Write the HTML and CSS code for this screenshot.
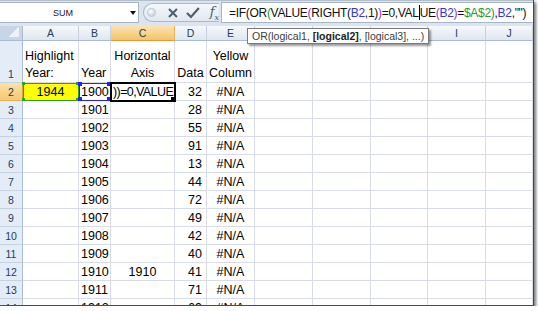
FILE: index.html
```html
<!DOCTYPE html>
<html lang="en">
<head>
    <meta charset="UTF-8">
    <meta name="viewport" content="width=device-width, initial-scale=1.0">
    <title>Highlight Year - Sheet1</title>
    <link rel="stylesheet" href="styles.css">
</head>
<body>
    <div class="window">
        <div class="formula-bar">
            <div class="name-box">
                <span class="name">SUM</span>
                <span class="drop"></span>
            </div>
            <div class="fx-buttons">
                <span class="dot"></span>
                <svg class="btn" width="12" height="12" viewBox="0 0 12 12">
                    <path d="M2 2 L10 10 M10 2 L2 10" stroke="#4f5c6c" stroke-width="2" fill="none"/>
                </svg>
                <svg class="btn" width="14" height="12" viewBox="0 0 14 12">
                    <path d="M1 6 L5 10 L13 1" stroke="#4f5c6c" stroke-width="2.2" fill="none"/>
                </svg>
                <span class="fx">f<sub>x</sub></span>
            </div>
            <div class="formula">=IF(OR<span class="p1">(</span>VALUE<span class="p2">(</span>RIGHT(<span class="r1">B2</span>,1)<span class="p2">)</span>=0,VAL<span class="caret"></span>UE<span class="p2">(</span><span class="r1">B2</span><span class="p2">)</span>=<span class="r2">$A$2</span><span class="p1">)</span>,<span class="r1">B2</span>,"")</div>
        </div>

        <div class="sheet" id="sheet"></div>

        <div class="tooltip">OR(logical1, <b>[logical2]</b>, [logical3], ...)</div>
    </div>

    <script>
        // Sheet data
        const cols = ['A', 'B', 'C', 'D', 'E', 'F', 'G', 'H', 'I', 'J'];
        const values = [32, 28, 55, 91, 13, 44, 72, 49, 42, 40, 41, 71, 69];

        const cells = {
            A1: { text: 'Highlight<br>Year:', cls: 'head left' },
            B1: { text: 'Year', cls: 'head left' },
            C1: { text: 'Horizontal<br>Axis', cls: 'head center' },
            D1: { text: 'Data', cls: 'head center' },
            E1: { text: 'Yellow<br>Column', cls: 'head center' },
            A2: { text: '1944<i class="h tl"></i><i class="h tr"></i><i class="h bl"></i><i class="h br"></i>', cls: 'center ref-green' },
            B2: { text: '1900<i class="h tl"></i><i class="h tr"></i><i class="h bl"></i><i class="h br"></i>', cls: 'left ref-blue' },
            C2: { text: '))=0,VALUE<i class="fill"></i>', cls: 'left active' },
            C12: { text: '1910', cls: 'center' }
        };

        values.forEach((v, i) => {
            const r = i + 2;
            cells['B' + r] = cells['B' + r] || { text: 1900 + i, cls: 'left' };
            cells['D' + r] = { text: v, cls: 'right' };
            cells['E' + r] = { text: '#N/A', cls: 'center' };
        });

        // Render grid
        function renderSheet() {
            let html = '<div class="corner"></div>';
            cols.forEach(c => {
                html += `<div class="col-head${c === 'C' ? ' sel' : ''}">${c}</div>`;
            });

            for (let r = 1; r <= 14; r++) {
                html += `<div class="row-head${r === 1 ? ' tall' : ''}${r === 2 ? ' sel' : ''}">${r}</div>`;
                cols.forEach(c => {
                    const cell = cells[c + r];
                    if (cell) {
                        html += `<div class="cell ${cell.cls}"><span class="txt">${cell.text}</span></div>`;
                    } else {
                        html += '<div class="cell"></div>';
                    }
                });
            }
            document.getElementById('sheet').innerHTML = html;
        }

        renderSheet();
    </script>
</body>
</html>
```

FILE: styles.css
```css
:root {
    --grid-line: #d8dce8;
    --head-line: #a9bcd3;
    --head-text: #233d5c;
    --sel-orange: #f5c96f;
}

* {
    margin: 0;
    padding: 0;
    box-sizing: border-box;
}

body {
    background-color: #ffffff;
    font-family: "Liberation Sans", Arial, sans-serif;
}

.window {
    position: relative;
    width: 534px;
    height: 306px;
    overflow: hidden;
    background-color: #ffffff;
    border-right: 1px solid #4a4a4a;
    border-bottom: 1px solid #4a4a4a;
    box-shadow: 2px 2px 3px rgba(0, 0, 0, 0.55);
}

/* Formula bar */
.formula-bar {
    height: 26px;
    display: flex;
    padding: 1px 0 3px;
    background-color: #dbe4ef;
    border-top: 1px solid #b3bfcd;
}

.name-box {
    width: 139px;
    flex-shrink: 0;
    display: flex;
    align-items: center;
    background-color: #ffffff;
    border: 1px solid #a8b5c6;
    border-left: none;
}

.name {
    flex: 1;
    text-align: center;
    font-size: 9px;
    color: #1a1a1a;
    padding-right: 4px;
}

.drop {
    width: 0;
    height: 0;
    margin-right: 2px;
    border-left: 3px solid transparent;
    border-right: 3px solid transparent;
    border-top: 4px solid #111;
}

.fx-buttons {
    width: 76px;
    flex-shrink: 0;
    margin: 1px 2px 1px 4px;
    display: flex;
    align-items: center;
    gap: 7px;
    padding-left: 3px;
    border: 1px solid #a9b8cb;
    border-right: none;
    border-radius: 10px 0 0 10px;
    background: linear-gradient(#f4f7fb, #e1e8f1);
}

.dot {
    width: 9px;
    height: 9px;
    border-radius: 50%;
    background: radial-gradient(circle at 40% 35%, #ffffff, #b9c1cb);
    border: 1px solid #c4ccd6;
    margin-right: 4px;
}

.fx {
    font-family: "DejaVu Serif", serif;
    font-style: italic;
    font-size: 13px;
    color: #4f5c6c;
    margin-left: 3px;
}

.fx sub {
    font-size: 8px;
}

.formula {
    flex: 1;
    min-width: 0;
    overflow: hidden;
    display: flex;
    align-items: center;
    padding-left: 7px;
    white-space: pre;
    background-color: #ffffff;
    border: 1px solid #a8b5c6;
    border-right: none;
    font-size: 12px;
    letter-spacing: -0.3px;
    color: #111;
}

.p1, .r2 {
    color: #2b9a2b;
}

.p2 {
    color: #8a38b8;
}

.r1 {
    color: #3434e6;
}

.caret {
    display: inline-block;
    width: 1px;
    height: 15px;
    background-color: #000;
}

/* Sheet grid */
.sheet {
    display: grid;
    grid-template-columns: 23px 56px 32px 64px 32px 48px 58px 58px 57px 58px 47px;
    grid-template-rows: 15px 42px repeat(13, 18px);
}

.corner {
    background:
        linear-gradient(to bottom right, transparent 50%, #eef2f7 50%) no-repeat right 3px bottom 3px / 11px 10px,
        #c8d5e6;
    border-right: 1px solid var(--head-line);
    border-bottom: 1px solid var(--head-line);
}

.col-head {
    display: flex;
    align-items: center;
    justify-content: center;
    font-size: 10.5px;
    color: var(--head-text);
    background: linear-gradient(#f6f9fc, #dfe6ef);
    border-right: 1px solid #c6d1de;
    border-bottom: 1px solid var(--head-line);
}

.col-head.sel {
    background: linear-gradient(#fbe3b2, #f3c468);
    border-right-color: #e8b15c;
    border-bottom: 1px solid #e59a3a;
}

.row-head {
    display: flex;
    align-items: center;
    justify-content: center;
    font-size: 10.5px;
    color: var(--head-text);
    background-color: #e4ecf7;
    border-right: 1px solid var(--head-line);
    border-bottom: 1px solid #c5d2e2;
}

.row-head.tall {
    align-items: flex-end;
    padding-bottom: 2px;
}

.row-head.sel {
    background: linear-gradient(#fbe1ab, var(--sel-orange));
    border-right-color: #e59a3a;
    border-bottom-color: #e8b15c;
}

.cell {
    display: flex;
    align-items: center;
    padding: 0 2px;
    font-size: 12.5px;
    color: #000;
    white-space: nowrap;
    border-right: 1px solid var(--grid-line);
    border-bottom: 1px solid var(--grid-line);
}

.cell.head {
    align-items: flex-end;
    line-height: 17px;
    padding-bottom: 0;
}

.cell.left {
    justify-content: flex-start;
}

.cell.center {
    justify-content: center;
    text-align: center;
}

.cell.right {
    justify-content: flex-end;
    padding-right: 4px;
}

.txt {
    display: block;
}

/* Reference and active cell markers */
.ref-green,
.ref-blue,
.active {
    position: relative;
}

.ref-green {
    background-color: #ffff00;
    outline: 1px solid #2f9e2f;
    outline-offset: -1px;
}

.ref-blue {
    outline: 1px solid #1f1fff;
    outline-offset: -1px;
}

.active {
    outline: 2px solid #000;
    outline-offset: -1px;
    overflow: hidden;
    letter-spacing: -0.6px;
    padding-left: 2px;
}

.h {
    position: absolute;
    width: 4px;
    height: 4px;
}

.ref-green .h {
    background-color: #2f9e2f;
    width: 3px;
    height: 3px;
}

.ref-blue .h {
    background-color: #1f1fff;
}

.h.tl { top: -1px; left: -1px; }
.h.tr { top: -1px; right: -1px; }
.h.bl { bottom: -1px; left: -1px; }
.h.br { bottom: -1px; right: -1px; }

.fill {
    position: absolute;
    right: -1px;
    bottom: -1px;
    width: 5px;
    height: 5px;
    background-color: #000;
    border-left: 1px solid #fff;
    border-top: 1px solid #fff;
}

/* Function tooltip */
.tooltip {
    position: absolute;
    left: 247px;
    top: 28px;
    height: 16px;
    padding: 0 4px;
    font-size: 10.5px;
    line-height: 14px;
    color: #3c3c3c;
    white-space: nowrap;
    background-color: #ffffff;
    border: 1px solid #7a7a7a;
    box-shadow: 2px 2px 2px rgba(0, 0, 0, 0.4);
}

.tooltip b {
    color: #222;
}
```
